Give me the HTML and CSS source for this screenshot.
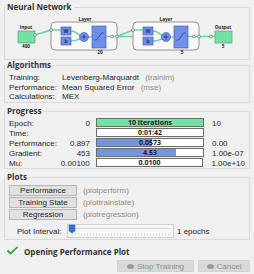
FILE: index.html
```html
<!DOCTYPE html>
<html lang="en">
<head>
    <meta charset="UTF-8">
    <title>Neural Network Training</title>
    <link rel="stylesheet" href="styles.css">
</head>
<body>
    <fieldset class="panel">
        <legend>Neural Network</legend>
        <svg class="net" width="236" height="47" viewBox="0 0 236 47">
            <g transform="translate(-9,-12)">
                <!-- input -->
                <text class="lbl" x="26" y="29">Input</text>
                <rect class="io" x="18" y="31" width="17" height="12"/>
                <text class="lbl" x="26" y="48">400</text>

                <polyline class="wire" points="35,35 51,30"/>

                <!-- hidden layer -->
                <text class="lbl" x="85" y="21">Layer</text>
                <rect class="layer" x="51" y="22" width="66" height="28" rx="4"/>
                <polyline class="wire" points="51,30 61,30"/>
                <path class="wire" d="M71 31 C76 31 77 34 80 35"/>
                <path class="wire" d="M71 41 C76 41 77 40 80 39"/>
                <line class="wire" x1="88" y1="37" x2="92" y2="37"/>
                <line class="wire" x1="106" y1="36.5" x2="133" y2="36.5"/>
                <rect class="blk" x="61" y="27" width="10" height="8"/>
                <text class="sym" x="66" y="33">W</text>
                <rect class="blk" x="61" y="37" width="10" height="8"/>
                <text class="sym" x="66" y="43">b</text>
                <circle class="blk" cx="84" cy="37" r="4.5"/>
                <path class="plus" d="M81.5 37 H86.5 M84 34.5 V39.5"/>
                <rect class="blk" x="92" y="26" width="14" height="22"/>
                <path class="tf" d="M94.5 40 H96.5 L101.5 33 H103.5"/>
                <text class="lbl" x="100" y="54">20</text>

                <polyline class="wire" points="117,36.5 133,30"/>

                <!-- output layer -->
                <text class="lbl" x="166" y="21">Layer</text>
                <rect class="layer" x="133" y="22" width="66" height="28" rx="4"/>
                <polyline class="wire" points="133,30 143,30"/>
                <path class="wire" d="M153 31 C158 31 159 34 162 35"/>
                <path class="wire" d="M153 41 C158 41 159 40 162 39"/>
                <line class="wire" x1="170" y1="37" x2="174" y2="37"/>
                <line class="wire" x1="188" y1="36.5" x2="215" y2="36.5"/>
                <rect class="blk" x="143" y="27" width="10" height="8"/>
                <text class="sym" x="148" y="33">W</text>
                <rect class="blk" x="143" y="37" width="10" height="8"/>
                <text class="sym" x="148" y="43">b</text>
                <circle class="blk" cx="166" cy="37" r="4.5"/>
                <path class="plus" d="M163.5 37 H168.5 M166 34.5 V39.5"/>
                <rect class="blk" x="174" y="26" width="14" height="22"/>
                <path class="tf" d="M176.5 40 H178.5 L183.5 33 H185.5"/>
                <text class="lbl" x="182" y="54">5</text>

                <!-- output -->
                <text class="lbl" x="223" y="29">Output</text>
                <rect class="io" x="215" y="31" width="17" height="12"/>
                <text class="lbl" x="223" y="48">5</text>

                <circle class="node" cx="35" cy="35" r="1.4"/>
                <circle class="node" cx="51" cy="30" r="1.4"/>
                <circle class="node" cx="112" cy="36.5" r="1.4"/>
                <circle class="node" cx="117" cy="36.5" r="1.4"/>
                <circle class="node" cx="133" cy="30" r="1.4"/>
                <circle class="node" cx="194" cy="36.5" r="1.4"/>
                <circle class="node" cx="199" cy="36.5" r="1.4"/>
                <circle class="node" cx="211" cy="36.5" r="1.4"/>
            </g>
        </svg>
    </fieldset>

    <fieldset class="panel">
        <legend>Algorithms</legend>
        <div class="algo">
            <span>Training:</span>
            <span>Levenberg-Marquardt <em>(trainlm)</em></span>
            <span>Performance:</span>
            <span>Mean Squared Error <em>(mse)</em></span>
            <span>Calculations:</span>
            <span>MEX</span>
        </div>
    </fieldset>

    <fieldset class="panel progress">
        <legend>Progress</legend>
        <div class="prow">
            <span class="plabel">Epoch:</span>
            <span class="pstart">0</span>
            <div class="bar green" style="--p: 100%">10 iterations</div>
            <span class="pend">10</span>
        </div>
        <div class="prow">
            <span class="plabel">Time:</span>
            <span class="pstart"></span>
            <div class="bar" style="--p: 0%">0:01:42</div>
            <span class="pend"></span>
        </div>
        <div class="prow">
            <span class="plabel">Performance:</span>
            <span class="pstart">0.897</span>
            <div class="bar" style="--p: 52%">0.0573</div>
            <span class="pend">0.00</span>
        </div>
        <div class="prow">
            <span class="plabel">Gradient:</span>
            <span class="pstart">453</span>
            <div class="bar" style="--p: 75%">4.53</div>
            <span class="pend">1.00e-07</span>
        </div>
        <div class="prow">
            <span class="plabel">Mu:</span>
            <span class="pstart">0.00100</span>
            <div class="bar" style="--p: 0%">0.0100</div>
            <span class="pend">1.00e+10</span>
        </div>
    </fieldset>

    <fieldset class="panel plots">
        <legend>Plots</legend>
        <div class="plot-row">
            <button class="pbtn">Performance</button>
            <em>(plotperform)</em>
        </div>
        <div class="plot-row">
            <button class="pbtn">Training State</button>
            <em>(plottrainstate)</em>
        </div>
        <div class="plot-row">
            <button class="pbtn">Regression</button>
            <em>(plotregression)</em>
        </div>
        <div class="interval">
            <span class="ilabel">Plot Interval:</span>
            <svg class="slider" width="107" height="14" viewBox="0 0 107 14">
                <rect x="0.5" y="0.5" width="106" height="13" fill="#f7f7f7" stroke="#cfcfcf"/>
                <line x1="4" y1="4.5" x2="104" y2="4.5" stroke="#d8d8d8" stroke-width="1"/>
                <path d="M5 9 V11 M103 9 V11" stroke="#bdbdbd" stroke-width="0.6"/>
                <path d="M5 10.5 H103" stroke="#c4c4c4" stroke-width="2" stroke-dasharray="0.6 2.4"/>
                <path d="M2 1 H8 V7 L5 9 L2 7 Z" fill="#2f74d6" stroke="#1e5bb3" stroke-width="0.5"/>
            </svg>
            <span>1 epochs</span>
        </div>
    </fieldset>

    <div class="status">
        <svg class="check" width="13" height="10" viewBox="0 0 13 10">
            <path d="M0.8 5.2 L4.6 8.8 L12.4 1.2 L11 0.4 L4.6 6.2 L2.2 3.8 Z" fill="#2fa33a"/>
        </svg>
        <span>Opening Performance Plot</span>
    </div>

    <div class="actions">
        <button class="abtn stop"><i class="dot"></i>Stop Training</button>
        <button class="abtn cancel"><i class="dot"></i>Cancel</button>
    </div>
</body>
</html>
```

FILE: styles.css
```css
* {
    box-sizing: border-box;
}

body {
    margin: 0;
    padding-top: 2px;
    width: 254px;
    height: 274px;
    overflow: hidden;
    background: #f0f0f0;
    font-family: "Liberation Sans", Arial, sans-serif;
    font-size: 8px;
    color: #1e1e1e;
}

em {
    font-style: normal;
    color: #8c8c8c;
}

.panel {
    margin: 0 4px;
    padding: 0 4px;
    min-width: 0;
    border: 1px solid #d9d9d9;
}

.panel legend {
    margin-left: -4px;
    padding: 0 2px 0 2px;
    font-family: "Open Sans", sans-serif;
    font-size: 8px;
    font-weight: bold;
    line-height: 10px;
    color: #333;
}

/* network diagram */
.net {
    display: block;
}

.net .lbl {
    font-family: "Open Sans", sans-serif;
    font-size: 4.6px;
    font-weight: bold;
    text-anchor: middle;
    fill: #222;
}

.net .sym {
    font-family: "Open Sans", sans-serif;
    font-size: 5px;
    font-weight: bold;
    text-anchor: middle;
    fill: #1b2a66;
}

.net .io {
    fill: #74e0a6;
    stroke: #3e9e6c;
    stroke-width: 0.6;
}

.net .layer {
    fill: #f8f8f8;
    stroke: #8a8a8a;
    stroke-width: 0.9;
}

.net .blk {
    fill: #6f8fe6;
    stroke: #3853ad;
    stroke-width: 0.6;
}

.net .wire {
    fill: none;
    stroke: #66d49a;
    stroke-width: 1.4;
}

.net .plus {
    stroke: #1b2a66;
    stroke-width: 0.7;
}

.net .tf {
    fill: none;
    stroke: #1b2a66;
    stroke-width: 0.6;
}

.net .node {
    fill: #fff;
    stroke: #333;
    stroke-width: 0.5;
}

/* algorithms */
.algo {
    display: grid;
    grid-template-columns: 53px auto;
    padding: 3px 0 0 0;
    line-height: 9.5px;
}

.algo em {
    margin-left: 4px;
}

/* progress */
.progress {
    margin-top: 3.5px;
    padding-top: 2px;
}

.prow {
    display: flex;
    align-items: center;
    height: 10px;
}

.plabel {
    width: 45px;
}

.pstart {
    width: 36px;
    text-align: right;
}

.bar {
    --fill: #7595e4;
    margin-left: 6px;
    width: 108px;
    height: 9px;
    align-self: flex-start;
    border: 1px solid #6b6b6b;
    background: linear-gradient(to right, var(--fill) var(--p), #fff var(--p));
    font-family: "Open Sans", sans-serif;
    font-size: 7px;
    font-weight: bold;
    line-height: 7px;
    text-align: center;
    color: #1a1a1a;
}

.bar.green {
    --fill: #72e2a4;
}

.pend {
    margin-left: 8px;
}

/* plots */
.plots {
    margin-top: 3px;
    padding-top: 3px;
    padding-bottom: 1px;
}

.plot-row {
    display: flex;
    align-items: center;
    gap: 6px;
    margin-bottom: 1px;
}

.pbtn {
    width: 68px;
    height: 11px;
    padding: 0;
    border: 1px solid #b4b4b4;
    background: #e1e1e1;
    font-family: inherit;
    font-size: 8px;
    line-height: 9px;
    color: #1e1e1e;
}

.interval {
    display: flex;
    align-items: center;
    margin-top: 4px;
    padding-left: 8px;
}

.ilabel {
    width: 50px;
}

.slider {
    display: block;
    margin-right: 3px;
}

/* footer */
.status {
    display: flex;
    align-items: center;
    gap: 5px;
    height: 14px;
    margin-top: 4px;
    padding-left: 6px;
    font-family: "Open Sans", sans-serif;
    font-weight: bold;
    color: #333;
}

.check {
    display: block;
}

.actions {
    display: flex;
    justify-content: flex-end;
    gap: 4px;
    margin-top: 2px;
    padding-right: 4px;
}

.abtn {
    display: flex;
    align-items: center;
    justify-content: center;
    gap: 3px;
    height: 12px;
    padding: 0;
    border: 1px solid #d2d2d2;
    background: #d9d9d9;
    font-family: inherit;
    font-size: 8px;
    color: #8d8d8d;
}

.abtn.stop {
    width: 77px;
}

.abtn.cancel {
    width: 52px;
}

.dot {
    width: 7px;
    height: 5px;
    border-radius: 50%;
    background: #9a9a9a;
}
```
